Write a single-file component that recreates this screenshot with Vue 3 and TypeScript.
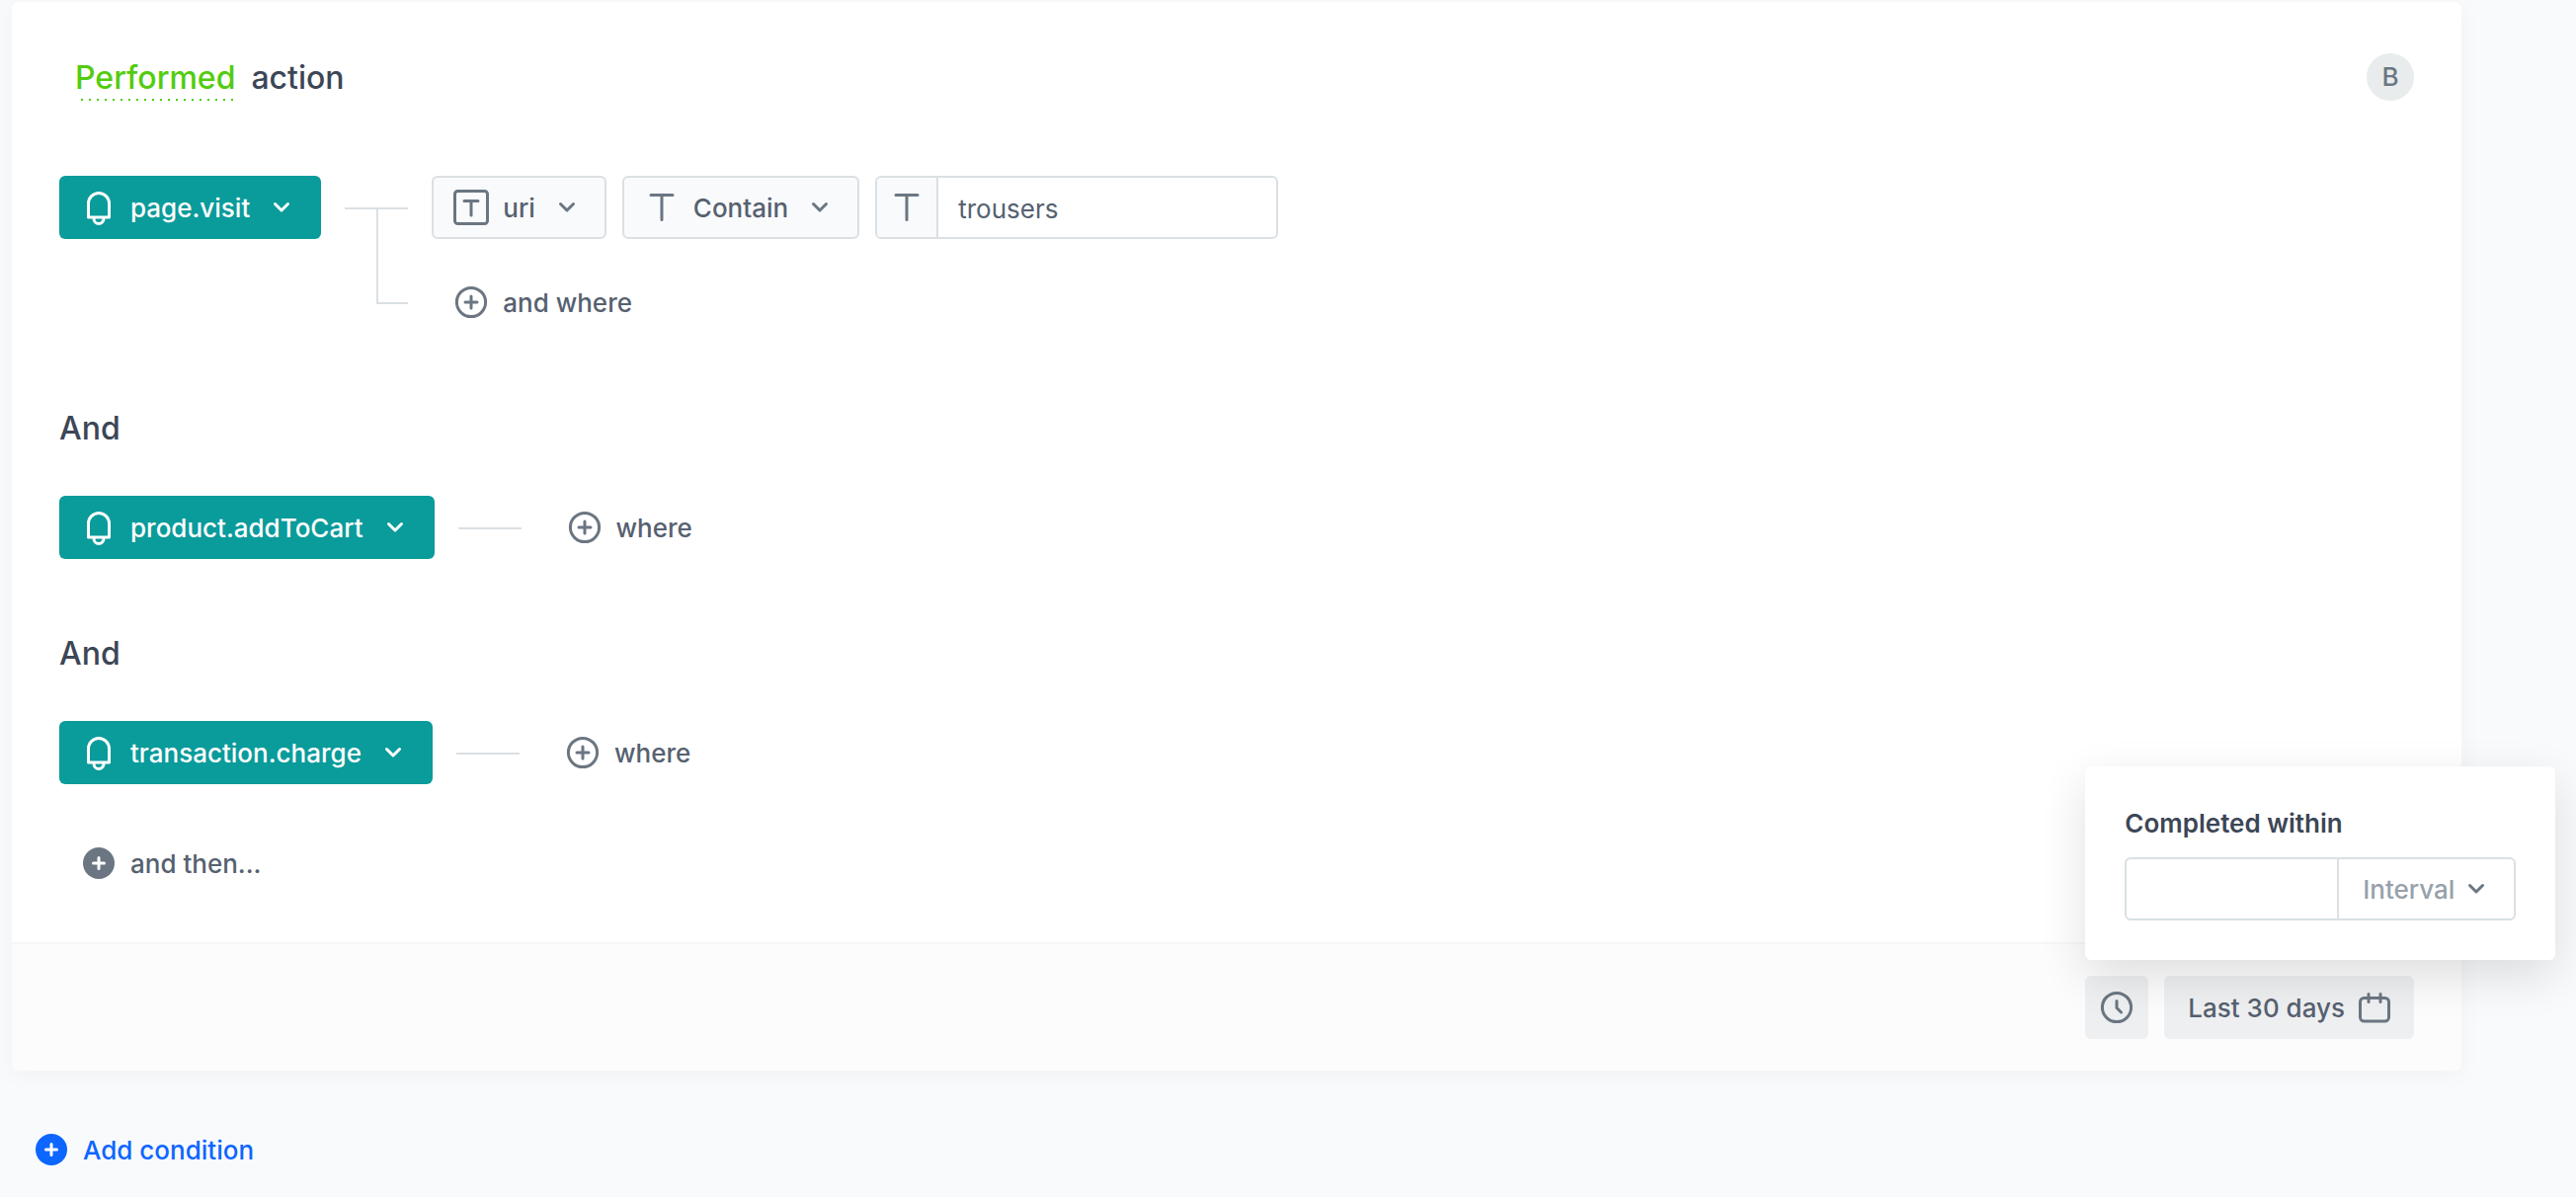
<script setup lang="ts">
import { ref } from 'vue'

interface Step {
  id: number
  event: string
  filtered: boolean
}

const events = ['page.visit', 'product.addToCart', 'transaction.charge']
const steps = ref<Step[]>([
  { id: 1, event: 'page.visit', filtered: true },
  { id: 2, event: 'product.addToCart', filtered: false },
  { id: 3, event: 'transaction.charge', filtered: false },
])

const attribute = ref('uri')
const operator = ref('Contain')
const value = ref('trousers')
const amount = ref('')
const interval = ref('Interval')
</script>

<template>
  <main class="page">
    <section class="card">
      <div class="body">
        <header class="head">
          <h1 class="title">
            <button type="button" class="mode">Performed</button>
            <span>action</span>
          </h1>
          <span class="badge">B</span>
        </header>

        <template v-for="(step, index) in steps" :key="step.id">
          <h2 v-if="index > 0" class="joiner">And</h2>
          <div class="step">
            <div class="pick event">
              <svg class="icon lead" viewBox="0 0 32 32" aria-hidden="true">
                <path d="M5.5 26V12a10.500 10.500 0 0 1 21 0V26z" />
                <path d="M11 27.5a5 5 0 0 0 10 0" />
              </svg>
              <select v-model="step.event" aria-label="Event">
                <option v-for="name in events" :key="name">{{ name }}</option>
              </select>
              <svg class="icon tail" viewBox="0 0 32 32" aria-hidden="true"><path d="M9.5 12.5l6.5 6.5 6.5-6.5" /></svg>
            </div>

            <svg v-if="step.filtered" class="link" width="64" height="160" viewBox="0 0 64 160" aria-hidden="true">
              <path d="M0 33H64M33 33V129H64" />
            </svg>
            <svg v-else class="link" width="64" height="64" viewBox="0 0 64 64" aria-hidden="true">
              <path d="M0 33H64" />
            </svg>

            <div class="filters">
              <div v-if="step.filtered" class="filter">
                <div class="pick field">
                  <svg class="icon lead" viewBox="0 0 32 32" aria-hidden="true">
                    <rect x="-0.5" y="-0.5" width="33" height="33" rx="3" />
                    <path d="M9 9.5H23M16 9.5V24" />
                  </svg>
                  <select v-model="attribute" aria-label="Attribute">
                    <option>uri</option>
                  </select>
                  <svg class="icon tail" viewBox="0 0 32 32" aria-hidden="true"><path d="M9.5 12.5l6.5 6.5 6.5-6.5" /></svg>
                </div>
                <div class="pick field">
                  <svg class="icon lead" viewBox="0 0 32 32" aria-hidden="true"><path d="M5 3.5H27M16 3.5V28.500" /></svg>
                  <select v-model="operator" aria-label="Operator">
                    <option>Contain</option>
                  </select>
                  <svg class="icon tail" viewBox="0 0 32 32" aria-hidden="true"><path d="M9.5 12.5l6.5 6.5 6.5-6.5" /></svg>
                </div>
                <label class="entry">
                  <span class="prefix">
                    <svg class="icon" viewBox="0 0 32 32" aria-hidden="true"><path d="M5 3.5H27M16 3.5V28.500" /></svg>
                  </span>
                  <input v-model="value" type="text" aria-label="Value" />
                </label>
              </div>
              <button type="button" class="ghost">
                <svg class="icon" viewBox="0 0 32 32" aria-hidden="true">
                  <circle cx="16" cy="16" r="14.6" />
                  <path d="M10 16H22M16 10V22" />
                </svg>
                <span class="text">{{ step.filtered ? 'and where' : 'where' }}</span>
              </button>
            </div>
          </div>
        </template>

        <button type="button" class="ghost then">
          <svg class="icon" viewBox="0 0 32 32" aria-hidden="true">
            <circle class="disc" cx="16" cy="16" r="16" />
            <path class="cut" d="M10.500 16H21.500M16 10.500V21.500" />
          </svg>
          <span class="text">and then...</span>
        </button>
      </div>

      <footer class="foot">
        <div class="anchor">
          <button type="button" class="chip square" aria-label="Completed within">
            <svg class="icon" viewBox="0 0 32 32" aria-hidden="true">
              <circle cx="16" cy="16" r="14.6" />
              <path d="M16 9.5V16.5L20.500 21" />
            </svg>
          </button>
          <div class="popover">
            <label class="caption" for="amount">Completed within</label>
            <div class="duration">
              <input id="amount" v-model="amount" type="text" />
              <div class="pick unit">
                <select v-model="interval" aria-label="Interval">
                  <option>Interval</option>
                </select>
                <svg class="icon tail" viewBox="0 0 32 32" aria-hidden="true"><path d="M9.5 12.5l6.5 6.5 6.5-6.5" /></svg>
              </div>
            </div>
          </div>
        </div>
        <button type="button" class="chip">
          <span class="text">Last 30 days</span>
          <svg class="icon" viewBox="0 0 32 32" aria-hidden="true">
            <rect x="1.5" y="6.5" width="29" height="23.500" rx="4" />
            <path d="M10 2.5V10.500M22 2.5V10.500" />
          </svg>
        </button>
      </footer>
    </section>

    <button type="button" class="add">
      <svg class="icon" viewBox="0 0 32 32" aria-hidden="true">
        <circle class="disc" cx="16" cy="16" r="16" />
        <path class="cut" d="M10.500 16H21.500M16 10.500V21.500" />
      </svg>
      <span class="text">Add condition</span>
    </button>
  </main>
</template>

<style>
body {
  background: #f9fafc;
}
</style>

<style scoped>
.page {
  box-sizing: border-box;
  min-height: 100vh;
  padding: 2px 116px 30px 12px;
  color: #566170;
  font: 500 26px/30px Inter, "Liberation Sans", sans-serif;
}

button,
select,
input {
  box-sizing: border-box;
  margin: 0;
  padding: 0;
  border: 0;
  background: none;
  color: inherit;
  font: inherit;
}

button,
select {
  cursor: pointer;
}

.card {
  border-radius: 6px;
  background: #fff;
  box-shadow: 0 4px 24px rgba(0, 0, 0, 0.04);
}

.body {
  padding: 52px 48px 48px;
}

.head {
  display: flex;
  justify-content: space-between;
  align-items: center;
  height: 48px;
  margin-bottom: 76px;
  padding-left: 16px;
}

.title {
  display: flex;
  gap: 16px;
  margin: 0;
  padding-top: 2px;
  color: #3c4656;
  font-size: 32px;
  font-weight: 500;
  line-height: 46px;
}

.mode {
  color: #52cc0f;
  background: repeating-linear-gradient(90deg, transparent 0 6px, currentColor 6px 8px) left bottom / 100% 2px no-repeat;
}

.badge {
  width: 48px;
  border-radius: 50%;
  background: #e8eced;
  color: #6b7682;
  line-height: 48px;
  text-align: center;
}

.joiner {
  margin: 74px 0 46px;
  color: #3c4656;
  font-size: 32px;
  font-weight: 500;
  line-height: 44px;
}

.step {
  display: flex;
  align-items: flex-start;
  gap: 24px;
}

.pick {
  display: grid;
  align-items: center;
}

.pick > * {
  grid-area: 1 / 1;
}

.pick select {
  height: 64px;
  padding: 2px 72px 0;
  border-radius: 6px;
  appearance: none;
  field-sizing: content;
}

.text {
  padding-top: 2px;
}

.icon {
  flex: none;
  width: 32px;
  height: 32px;
  overflow: visible;
  fill: none;
  stroke: #6b7682;
  stroke-width: 3;
  stroke-linecap: round;
  stroke-linejoin: round;
}

.lead,
.tail {
  z-index: 1;
  margin: 0 24px;
  pointer-events: none;
}

.tail {
  justify-self: end;
}

.event select {
  background: #0a9b9b;
  color: #fff;
}

.event .icon {
  stroke: #fff;
}

.pick.field select {
  padding: 2px 70px 0;
  border: 2px solid #dae0e3;
  background: #f9fafc;
}

.link {
  flex: none;
  fill: none;
  stroke: #dae0e3;
  stroke-width: 2;
}

.filters {
  display: flex;
  flex-direction: column;
  align-items: flex-start;
  gap: 32px;
}

.filter {
  display: flex;
  gap: 16px;
}

.entry,
.duration {
  display: flex;
  box-sizing: border-box;
  height: 64px;
  border: 2px solid #dae0e3;
  border-radius: 6px;
  background: #fff;
  overflow: hidden;
}

.entry {
  width: 408px;
}

.prefix {
  display: flex;
  align-items: center;
  padding: 0 14px;
  border-right: 2px solid #dae0e3;
  background: #f9fafc;
}

.entry input,
.duration input {
  flex: 1;
  min-width: 0;
  padding: 4px 20px 0;
  font-weight: 400;
}

.ghost,
.add {
  display: flex;
  align-items: center;
  gap: 16px;
}

.ghost {
  height: 64px;
  padding: 0 24px;
}

.then {
  margin-top: 48px;
}

.disc {
  fill: #6b7682;
  stroke: none;
}

.cut {
  stroke: #fff;
}

.foot {
  display: flex;
  justify-content: flex-end;
  gap: 16px;
  padding: 32px 48px;
  border-top: 2px solid #f5f6f7;
  border-radius: 0 0 6px 6px;
  background: #fcfcfc;
}

.anchor {
  position: relative;
}

.chip {
  display: flex;
  align-items: center;
  gap: 14px;
  height: 64px;
  padding: 0 24px;
  border-radius: 6px;
  background: #eeeff1;
}

.square {
  padding: 0 16px;
}

.popover {
  position: absolute;
  bottom: 80px;
  left: 0;
  box-sizing: border-box;
  width: 476px;
  padding: 40px;
  border-radius: 6px;
  background: #fff;
  box-shadow: 0 16px 48px rgba(0, 0, 0, 0.12);
}

.caption {
  display: block;
  margin-bottom: 16px;
  color: #3c4656;
  font-weight: 600;
  line-height: 36px;
}

.unit {
  border-left: 2px solid #dae0e3;
}

.pick.unit select {
  height: 60px;
  padding: 2px 60px 0 24px;
  color: #97a1ab;
}

.unit .tail {
  margin: 0 22px;
}

.add {
  margin: 64px 0 0 24px;
  color: #0d66ff;
}

.add .disc {
  fill: #0d66ff;
}
</style>
